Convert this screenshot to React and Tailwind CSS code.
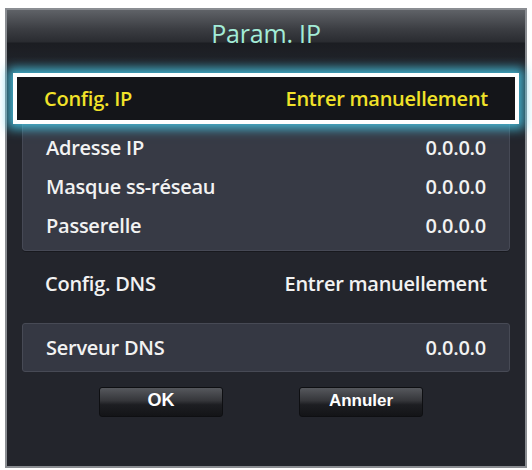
import React from "react";

const font = { fontFamily: '"Open Sans", "Noto Sans", sans-serif' };

function Row({ label, value, className = "" }) {
  return (
    <div className={`flex items-center justify-between ${className}`}>
      <span>{label}</span>
      <span>{value}</span>
    </div>
  );
}

export default function App() {
  return (
    <div className="w-[532px] h-[470px] bg-white pt-[8px] pl-[5px]" style={font}>
      <div className="w-[522px] h-[460px] border-2 border-[#8a8d92] bg-[#23252c] flex flex-col text-[#f2f2f2] text-[20px] font-semibold tracking-[-0.25px]">
        <div className="h-[63px] flex justify-center pt-[8px] bg-[linear-gradient(to_bottom,#5f6267_0%,#3c3e43_30%,#2a2c31_50%,#1b1d22_53%,#1f2127_75%,#23252c_100%)]">
          <span className="text-[25px] font-normal leading-[30px] text-[#a3ecd7] tracking-[-0.2px]">Param. IP</span>
        </div>
        <div className="mx-[6px] h-[51px] border-4 border-white bg-[#141519] px-[27px] flex items-center justify-between text-[#f1e229] shadow-[0_0_10px_5px_rgba(70,200,232,0.85)] relative z-10">
          <span>Config. IP</span>
          <span>Entrer manuellement</span>
        </div>
        <div className="mx-[15px] h-[127px] pt-[4px] px-[23px] bg-[#373a45] rounded-b-[4px] border-b border-x border-[#464955] shadow-[0_1px_0_rgba(0,0,0,0.3)]">
          <Row label="Adresse IP" value="0.0.0.0" className="h-[39px]" />
          <Row label="Masque ss-réseau" value="0.0.0.0" className="h-[39px]" />
          <Row label="Passerelle" value="0.0.0.0" className="h-[39px]" />
        </div>
        <Row label="Config. DNS" value="Entrer manuellement" className="h-[66px] mx-[15px] px-[23px]" />
        <div className="mt-[6px] mx-[15px] h-[49px] px-[23px] bg-[#353843] border border-[#474a55] rounded-[3px] flex items-center justify-between">
          <span>Serveur DNS</span>
          <span>0.0.0.0</span>
        </div>
        <div className="mt-[15px] flex pl-[92px] gap-[76px]" style={{ fontFamily: '"Liberation Sans", Arial, sans-serif' }}>
          <div className="w-[124px] h-[30px] rounded-[3px] border border-[#0e0f12] bg-[linear-gradient(to_bottom,#56585d_0%,#35363a_45%,#1d1e22_60%,#131417_100%)] flex items-center justify-center pb-[3px] text-white text-[18px] font-bold tracking-normal">
            OK
          </div>
          <div className="w-[124px] h-[30px] rounded-[3px] border border-[#0e0f12] bg-[linear-gradient(to_bottom,#56585d_0%,#35363a_45%,#1d1e22_60%,#131417_100%)] flex items-center justify-center pb-[3px] text-white text-[17px] font-bold tracking-normal">
            Annuler
          </div>
        </div>
      </div>
    </div>
  );
}
